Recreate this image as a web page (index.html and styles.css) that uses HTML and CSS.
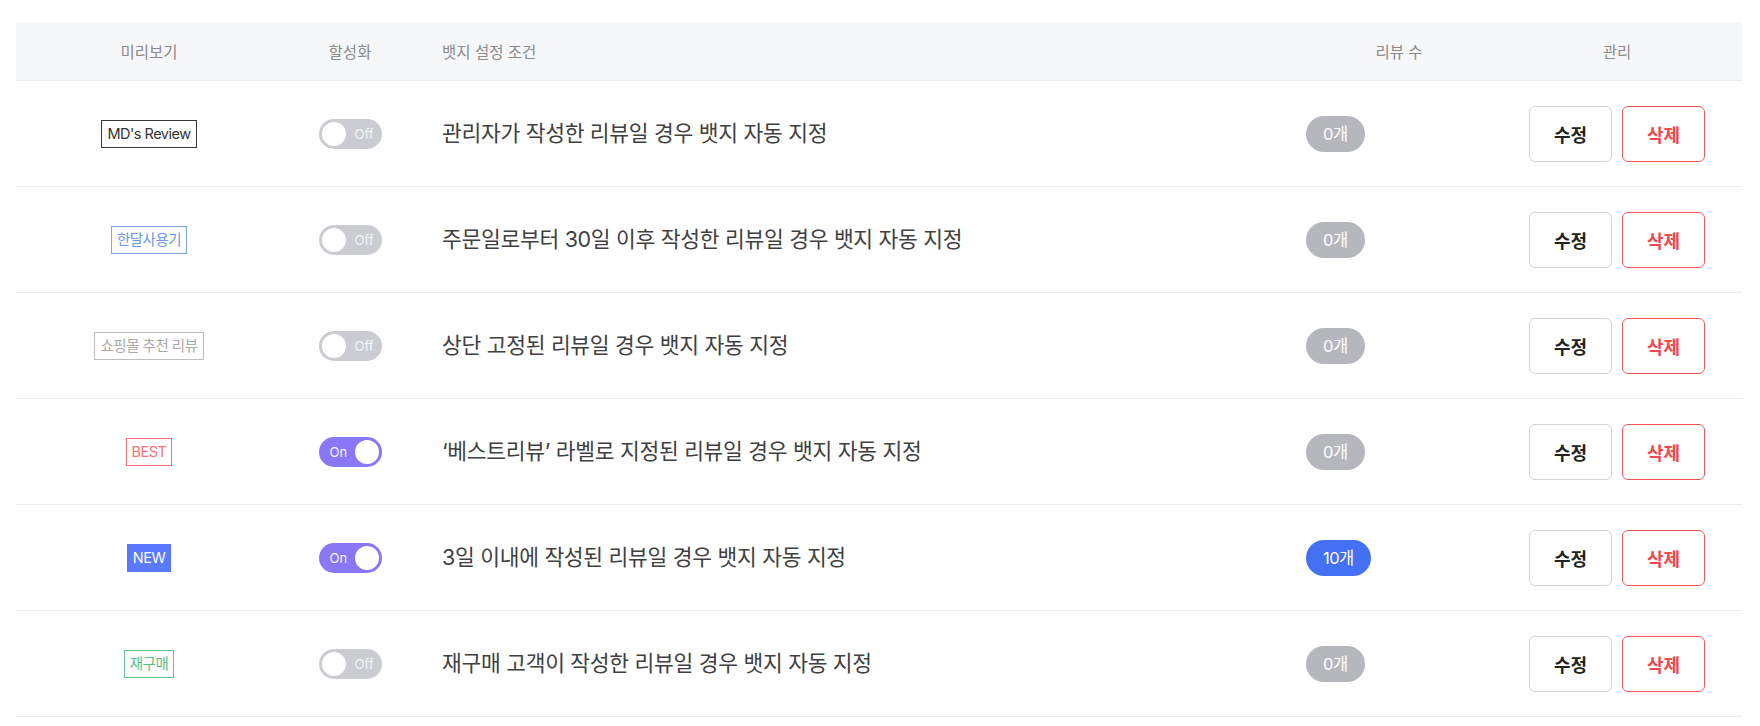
FILE: index.html
```html
<!DOCTYPE html>
<html lang="ko">
<head>
    <meta charset="UTF-8">
    <meta name="viewport" content="width=device-width, initial-scale=1.0">
    <title>뱃지 관리</title>
    <link rel="stylesheet" href="styles.css">
</head>
<body>
    <div class="badge-table">
        <div class="row head">
            <div class="cell center">미리보기</div>
            <div class="cell center">할성화</div>
            <div class="cell cond">뱃지 설정 조건</div>
            <div class="cell center">리뷰 수</div>
            <div class="cell manage">관리</div>
        </div>

        <div class="row">
            <div class="cell center"><span class="badge badge-md">MD's Review</span></div>
            <div class="cell center"><span class="toggle"><span class="knob"></span><span class="label">Off</span></span></div>
            <div class="cell cond">관리자가 작성한 리뷰일 경우 뱃지 자동 지정</div>
            <div class="cell count"><span class="pill">0개</span></div>
            <div class="cell manage">
                <button class="btn btn-edit">수정</button>
                <button class="btn btn-delete">삭제</button>
            </div>
        </div>

        <div class="row">
            <div class="cell center"><span class="badge badge-month">한달사용기</span></div>
            <div class="cell center"><span class="toggle"><span class="knob"></span><span class="label">Off</span></span></div>
            <div class="cell cond">주문일로부터 30일 이후 작성한 리뷰일 경우 뱃지 자동 지정</div>
            <div class="cell count"><span class="pill">0개</span></div>
            <div class="cell manage">
                <button class="btn btn-edit">수정</button>
                <button class="btn btn-delete">삭제</button>
            </div>
        </div>

        <div class="row">
            <div class="cell center"><span class="badge badge-shop">쇼핑몰 추천 리뷰</span></div>
            <div class="cell center"><span class="toggle"><span class="knob"></span><span class="label">Off</span></span></div>
            <div class="cell cond">상단 고정된 리뷰일 경우 뱃지 자동 지정</div>
            <div class="cell count"><span class="pill">0개</span></div>
            <div class="cell manage">
                <button class="btn btn-edit">수정</button>
                <button class="btn btn-delete">삭제</button>
            </div>
        </div>

        <div class="row">
            <div class="cell center"><span class="badge badge-best">BEST</span></div>
            <div class="cell center"><span class="toggle on"><span class="label">On</span><span class="knob"></span></span></div>
            <div class="cell cond">‘베스트리뷰’ 라벨로 지정된 리뷰일 경우 뱃지 자동 지정</div>
            <div class="cell count"><span class="pill">0개</span></div>
            <div class="cell manage">
                <button class="btn btn-edit">수정</button>
                <button class="btn btn-delete">삭제</button>
            </div>
        </div>

        <div class="row">
            <div class="cell center"><span class="badge badge-new">NEW</span></div>
            <div class="cell center"><span class="toggle on"><span class="label">On</span><span class="knob"></span></span></div>
            <div class="cell cond">3일 이내에 작성된 리뷰일 경우 뱃지 자동 지정</div>
            <div class="cell count"><span class="pill active">10개</span></div>
            <div class="cell manage">
                <button class="btn btn-edit">수정</button>
                <button class="btn btn-delete">삭제</button>
            </div>
        </div>

        <div class="row">
            <div class="cell center"><span class="badge badge-rebuy">재구매</span></div>
            <div class="cell center"><span class="toggle"><span class="knob"></span><span class="label">Off</span></span></div>
            <div class="cell cond">재구매 고객이 작성한 리뷰일 경우 뱃지 자동 지정</div>
            <div class="cell count"><span class="pill">0개</span></div>
            <div class="cell manage">
                <button class="btn btn-edit">수정</button>
                <button class="btn btn-delete">삭제</button>
            </div>
        </div>
    </div>
</body>
</html>
```

FILE: styles.css
```css
body {
    margin: 22px 18px 0 16px;
    background-color: #fff;
    color: #333;
    font-family: Inter, "Noto Sans CJK KR", sans-serif;
}
.row {
    display: grid;
    grid-template-columns: 266px 136px 1fr 234px 226px;
    align-items: center;
    height: 105px;
    border-bottom: 1px solid #ececec;
}
.row.head {
    height: 58px;
    background-color: #f6f7f9;
    color: #8a8a8a;
    font-size: 15.5px;
}
.cell {
    display: flex;
    align-items: center;
}
.cell.center {
    justify-content: center;
}
.cell.cond {
    padding-left: 24px;
    padding-bottom: 4px;
    font-size: 21.5px;
    letter-spacing: -0.3px;
    color: #404040;
}
.head .cell.cond {
    padding-bottom: 0;
    font-size: 15.5px;
    letter-spacing: 0;
    color: #8a8a8a;
}
.cell.count {
    padding-left: 24px;
}
.cell.manage {
    justify-content: center;
    gap: 10px;
    padding-right: 24px;
}

/* badge previews */
.badge {
    display: inline-block;
    height: 26px;
    line-height: 26px;
    padding: 0 5px;
    border: 1px solid #333;
    font-size: 14.5px;
    letter-spacing: -0.5px;
    white-space: nowrap;
}
.badge-md {
    color: #333;
    border-color: #3a3a3a;
}
.badge-month {
    color: #6a98ea;
    border-color: #7ea6ef;
}
.badge-shop {
    color: #a9a9a9;
    border-color: #bdbdbd;
}
.badge-best {
    color: #f77272;
    border-color: #f77272;
}
.badge-new {
    color: #fff;
    background-color: #5a79ff;
    border-color: #5a79ff;
}
.badge-rebuy {
    color: #54c384;
    border-color: #5ec98b;
}

/* on/off switch */
.toggle {
    display: flex;
    align-items: center;
    justify-content: space-between;
    box-sizing: border-box;
    width: 63px;
    height: 30px;
    padding: 3px 8px 3px 3px;
    border-radius: 15px;
    background-color: #cbccd1;
}
.toggle .knob {
    width: 24px;
    height: 24px;
    border-radius: 50%;
    background-color: #fff;
}
.toggle .label {
    font-size: 13px;
    color: #f4f4f6;
}
.toggle.on {
    padding: 3px 3px 3px 11px;
    background-color: #8878f6;
}

/* review count */
.pill {
    display: inline-block;
    height: 36px;
    line-height: 36px;
    padding: 0 17px;
    border-radius: 18px;
    background-color: #b6b7bc;
    color: #fff;
    font-size: 16.5px;
    letter-spacing: -0.5px;
}
.pill.active {
    background-color: #4470f4;
}

/* manage buttons */
.btn {
    width: 83px;
    height: 56px;
    border-radius: 6px;
    background-color: #fff;
    font-family: inherit;
    font-size: 18px;
    font-weight: 700;
    cursor: pointer;
}
.btn-edit {
    border: 1px solid #d2d2d7;
    color: #222;
}
.btn-delete {
    border: 1px solid #f65656;
    color: #f5474f;
}
```
